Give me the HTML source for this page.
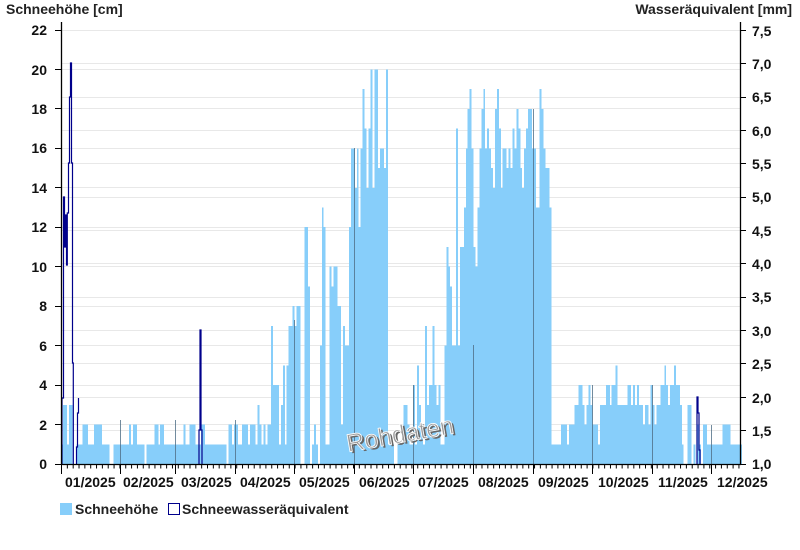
<!DOCTYPE html>
<html><head><meta charset="utf-8"><style>
html,body{margin:0;padding:0;background:#fff;}
svg{display:block;font-family:"Liberation Sans",Arial,sans-serif;}
</style></head><body>
<svg width="800" height="550" viewBox="0 0 800 550" xmlns="http://www.w3.org/2000/svg">
<rect width="800" height="550" fill="#fff"/>
<g stroke="#e8e8e8" stroke-width="1">
<line x1="61" x2="740" y1="424.5" y2="424.5"/><line x1="61" x2="740" y1="385.5" y2="385.5"/><line x1="61" x2="740" y1="345.5" y2="345.5"/><line x1="61" x2="740" y1="306.5" y2="306.5"/><line x1="61" x2="740" y1="266.5" y2="266.5"/><line x1="61" x2="740" y1="227.5" y2="227.5"/><line x1="61" x2="740" y1="187.5" y2="187.5"/><line x1="61" x2="740" y1="148.5" y2="148.5"/><line x1="61" x2="740" y1="108.5" y2="108.5"/><line x1="61" x2="740" y1="69.5" y2="69.5"/><line x1="61" x2="740" y1="30.5" y2="30.5"/>
<line x1="61" x2="740" y1="430.5" y2="430.5"/><line x1="61" x2="740" y1="397.5" y2="397.5"/><line x1="61" x2="740" y1="363.5" y2="363.5"/><line x1="61" x2="740" y1="330.5" y2="330.5"/><line x1="61" x2="740" y1="297.5" y2="297.5"/><line x1="61" x2="740" y1="263.5" y2="263.5"/><line x1="61" x2="740" y1="230.5" y2="230.5"/><line x1="61" x2="740" y1="197.5" y2="197.5"/><line x1="61" x2="740" y1="163.5" y2="163.5"/><line x1="61" x2="740" y1="130.5" y2="130.5"/><line x1="61" x2="740" y1="97.5" y2="97.5"/><line x1="61" x2="740" y1="63.5" y2="63.5"/>
</g>
<g transform="translate(61,464) scale(1.946,-19.73)">
<path fill="#87cefa" shape-rendering="crispEdges" d="M0,0
V1h1V3h1V3h1V1h1V3h1V3h1V0h1V0h1V1h1V1h1V1h1V2h1V2h1V2h1V1h1V1h1V1h1V2h1V2h1V2h1V2h1V1h1V1h1V1h1V1h1V0h1V0h1V1h1V1h1V1h1V1h1
V1h1V1h1V1h1V1h1V2h1V1h1V2h1V2h1V1h1V1h1V1h1V1h1V0h1V1h1V1h1V1h1V1h1V2h1V2h1V1h1V2h1V2h1V1h1V1h1V1h1V1h1V1h1V1h1
V1h1V1h1V1h1V1h1V2h1V1h1V1h1V2h1V2h1V2h1V1h1V1h1V1h1V2h1V2h1V1h1V1h1V1h1V1h1V1h1V1h1V1h1V1h1V1h1V1h1V1h1V0h1V2h1V2h1V1h1V2h1
V2h1V1h1V1h1V2h1V2h1V2h1V1h1V2h1V2h1V2h1V1h1V3h1V2h1V1h1V2h1V1h1V2h1V2h1V7h1V4h1V4h1V4h1V1h1V3h1V5h1V1h1V5h1V7h1V7h1V8h1
V7h1V8h1V8h1V0h1V0h1V12h1V12h1V9h1V0h1V1h1V2h1V1h1V0h1V6h1V13h1V12h1V1h1V1h1V10h1V9h1V10h1V10h1V8h1V8h1V2h1V7h1V6h1V6h1V12h1V16h1V16h1
V14h1V16h1V12h1V16h1V19h1V17h1V14h1V17h1V20h1V14h1V20h1V20h1V15h1V16h1V16h1V15h1V20h1V1h1V1h1V1h1V0h1V0h1V1h1V1h1V1h1V3h1V3h1V2h1V1h1V1h1
V4h1V1h1V5h1V3h1V2h1V1h1V7h1V3h1V4h1V4h1V7h1V4h1V3h1V4h1V1h1V1h1V6h1V11h1V10h1V9h1V6h1V6h1V17h1V6h1V11h1V11h1V13h1V16h1V18h1V19h1V16h1
V11h1V10h1V13h1V16h1V18h1V19h1V16h1V17h1V16h1V15h1V14h1V18h1V19h1V17h1V14h1V16h1V16h1V15h1V16h1V15h1V17h1V16h1V18h1V17h1V15h1V14h1V16h1V17h1V18h1V18h1V16h1
V16h1V13h1V13h1V19h1V18h1V16h1V15h1V15h1V13h1V1h1V1h1V1h1V1h1V1h1V2h1V2h1V2h1V1h1V2h1V2h1V2h1V3h1V3h1V4h1V4h1V3h1V2h1V3h1V4h1V3h1
V2h1V2h1V2h1V1h1V3h1V3h1V3h1V4h1V4h1V3h1V4h1V4h1V5h1V3h1V3h1V3h1V3h1V3h1V4h1V4h1V3h1V4h1V3h1V4h1V3h1V3h1V2h1V3h1V3h1V2h1V4h1
V3h1V2h1V3h1V3h1V4h1V4h1V5h1V4h1V3h1V4h1V4h1V5h1V4h1V4h1V3h1V1h1V0h1V0h1V3h1V3h1V0h1V1h1V0h1V2h1V1h1V0h1V2h1V2h1V1h1V1h1
V1h1V1h1V1h1V1h1V1h1V1h1V2h1V2h1V2h1V2h1V1h1V1h1V1h1V1h1V1h1V1h1V0Z"/>
</g>
<g stroke="#4f6f86" stroke-width="1" opacity="0.8">
<line x1="120.5" x2="120.5" y1="420" y2="464"/><line x1="175.5" x2="175.5" y1="420" y2="464"/><line x1="235.5" x2="235.5" y1="420" y2="464"/><line x1="294.5" x2="294.5" y1="320" y2="464"/><line x1="354.5" x2="354.5" y1="148" y2="464"/><line x1="413.5" x2="413.5" y1="385" y2="464"/><line x1="473.5" x2="473.5" y1="345" y2="464"/><line x1="533.5" x2="533.5" y1="109" y2="464"/><line x1="592.5" x2="592.5" y1="385" y2="464"/><line x1="652.5" x2="652.5" y1="385" y2="464"/><line x1="711.5" x2="711.5" y1="425" y2="464"/>
</g>
<g fill="none" stroke="#00008b" stroke-width="1.2">
<path d="M62,464V398H63.5V263V197H64.5V247H65.5V215H66.5V265H67.3V213H68.5V163H69.5V97H70.5V63H71.5V163H72.5V363H73.3V464"/>
<path d="M76.5,464V447H77.5V413H78.5V398"/>
<path d="M199,464V430H200V330H201V430H202V464"/>
<path d="M697,464V397H698V413H699V450H700V464"/>
</g>
<g stroke="#000" stroke-width="1.3">
<line x1="61.5" x2="61.5" y1="22" y2="465"/>
<line x1="740.5" x2="740.5" y1="22" y2="465"/>
<line x1="61" x2="741" y1="464.5" y2="464.5"/>
</g>
<g stroke="#000" stroke-width="1">
<line x1="61" x2="744" y1="466.5" y2="466.5" stroke-width="4" stroke-dasharray="1 4.84" fill="none"/>
<path d="M61.5,464V474M120.5,464V474M175.5,464V474M235.5,464V474M294.5,464V474M354.5,464V474M413.5,464V474M473.5,464V474M533.5,464V474M592.5,464V474M652.5,464V474M711.5,464V474"/>
<path d="M55,464.5H61M55,424.5H61M55,385.5H61M55,345.5H61M55,306.5H61M55,266.5H61M55,227.5H61M55,187.5H61M55,148.5H61M55,108.5H61M55,69.5H61M55,30.5H61"/>
<path d="M740,464.5H746M740,430.5H746M740,397.5H746M740,363.5H746M740,330.5H746M740,297.5H746M740,263.5H746M740,230.5H746M740,197.5H746M740,163.5H746M740,130.5H746M740,97.5H746M740,63.5H746M740,30.5H746"/>
</g>
<g font-size="14" font-weight="bold" fill="#222">
<text x="6" y="14">Schneehöhe [cm]</text>
<text x="792" y="14" text-anchor="end">Wasseräquivalent [mm]</text>
</g>
<g font-size="14" font-weight="bold" fill="#111" text-anchor="end">
<text x="47" y="469">0</text><text x="47" y="430">2</text><text x="47" y="390">4</text><text x="47" y="351">6</text><text x="47" y="311">8</text><text x="47" y="272">10</text><text x="47" y="232">12</text><text x="47" y="193">14</text><text x="47" y="153">16</text><text x="47" y="114">18</text><text x="47" y="75">20</text><text x="47" y="35">22</text>
</g>
<g font-size="14" font-weight="bold" fill="#111">
<text x="752" y="469">1,0</text><text x="752" y="436">1,5</text><text x="752" y="403">2,0</text><text x="752" y="369">2,5</text><text x="752" y="336">3,0</text><text x="752" y="302">3,5</text><text x="752" y="269">4,0</text><text x="752" y="236">4,5</text><text x="752" y="202">5,0</text><text x="752" y="169">5,5</text><text x="752" y="136">6,0</text><text x="752" y="102">6,5</text><text x="752" y="69">7,0</text><text x="752" y="36">7,5</text>
</g>
<g font-size="14" font-weight="bold" fill="#111">
<text x="65" y="487">01/2025</text><text x="123" y="487">02/2025</text><text x="181" y="487">03/2025</text><text x="240" y="487">04/2025</text><text x="299" y="487">05/2025</text><text x="359" y="487">06/2025</text><text x="418" y="487">07/2025</text><text x="478" y="487">08/2025</text><text x="538" y="487">09/2025</text><text x="598" y="487">10/2025</text><text x="658" y="487">11/2025</text><text x="717" y="487">12/2025</text>
</g>
<g transform="rotate(-10 348 452)" font-size="25">
<text x="350" y="454" fill="#666">Rohdaten</text>
<text x="348" y="452" fill="#9a9a9a" stroke="#fff" stroke-width="0.8">Rohdaten</text>
</g>
<rect x="60" y="503" width="12" height="12" fill="#87cefa"/>
<text x="75" y="514" font-size="14" font-weight="bold" fill="#222">Schneehöhe</text>
<rect x="168.5" y="503.5" width="11" height="11" fill="#fff" stroke="#00008b"/>
<text x="182" y="514" font-size="14" font-weight="bold" fill="#222">Schneewasseräquivalent</text>
</svg>
</body></html>
